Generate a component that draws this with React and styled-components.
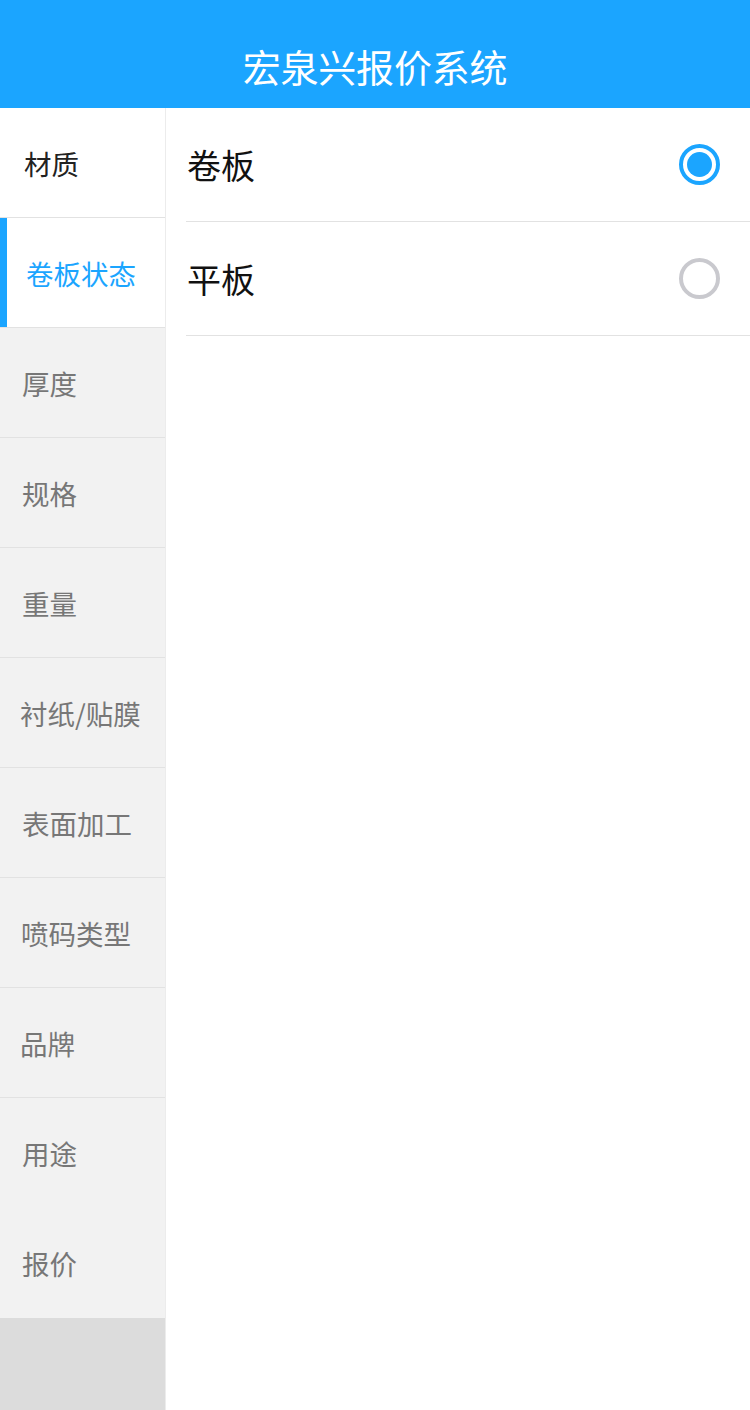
import React, { useState } from "react";
import styled, { createGlobalStyle } from "styled-components";

const GlobalStyle = createGlobalStyle`
  html, body { margin: 0; padding: 0; background: #fff; }
  body { font-family: "Noto Sans CJK SC", "Noto Sans", sans-serif; }
  * { box-sizing: border-box; }
`;

const Page = styled.div`
  width: 750px;
  height: 1410px;
  display: flex;
  flex-direction: column;
  overflow: hidden;
`;

const Header = styled.header`
  height: 108px;
  background: #1ba5ff;
  display: flex;
  align-items: flex-end;
  justify-content: center;
  padding-bottom: 23px;
`;

const Title = styled.h1`
  margin: 0;
  color: #fff;
  font-size: 38px;
  line-height: 38px;
  font-weight: 400;
  letter-spacing: -0.2px;
`;

const Body = styled.div`
  flex: 1;
  display: flex;
`;

const Sidebar = styled.nav`
  width: 166px;
  display: flex;
  flex-direction: column;
  background: #dcdcdc;
  border-right: 1px solid #ececec;
`;

const NavItem = styled.div`
  height: 110px;
  display: flex;
  align-items: center;
  padding-left: ${(p) => p.$pad}px;
  font-size: 27.5px;
  background: ${(p) => (p.$white ? "#fff" : "#f2f2f2")};
  color: ${(p) => (p.$active ? "#1ba5ff" : p.$dark ? "#222" : "#777")};
  border-bottom: ${(p) => (p.$noBorder ? "none" : "1px solid #e2e2e2")};
  box-shadow: ${(p) => (p.$active ? "inset 7px 0 0 #1ba5ff" : "none")};
  white-space: nowrap;
`;

const Content = styled.main`
  flex: 1;
  display: flex;
  flex-direction: column;
  padding-left: 20px;
  background: #fff;
`;

const OptionRow = styled.div`
  height: 114px;
  display: flex;
  align-items: center;
  justify-content: space-between;
  padding-right: 30px;
  border-bottom: 1px solid #e2e2e2;
  cursor: pointer;
`;

const OptionLabel = styled.span`
  font-size: 34px;
  color: #111;
  margin-left: 1px;
`;

const Radio = styled.span`
  width: 41px;
  height: 41px;
  border-radius: 50%;
  border: 4px solid ${(p) => (p.$checked ? "#1ba5ff" : "#c9c9ce")};
  display: flex;
  align-items: center;
  justify-content: center;
  &::after {
    content: "";
    width: 25px;
    height: 25px;
    border-radius: 50%;
    background: #1ba5ff;
    display: ${(p) => (p.$checked ? "block" : "none")};
  }
`;

const navItems = [
  { label: "材质", pad: 24, white: true, dark: true },
  { label: "卷板状态", pad: 26, white: true, active: true },
  { label: "厚度", pad: 22 },
  { label: "规格", pad: 22 },
  { label: "重量", pad: 22 },
  { label: "衬纸/贴膜", pad: 20 },
  { label: "表面加工", pad: 22 },
  { label: "喷码类型", pad: 21 },
  { label: "品牌", pad: 20 },
  { label: "用途", pad: 22, noBorder: true },
  { label: "报价", pad: 22, noBorder: true },
];

export default function App() {
  const [selected, setSelected] = useState("卷板");
  return (
    <>
      <GlobalStyle />
      <Page>
        <Header>
          <Title>宏泉兴报价系统</Title>
        </Header>
        <Body>
          <Sidebar>
            {navItems.map((n) => (
              <NavItem
                key={n.label}
                $pad={n.pad}
                $white={n.white}
                $dark={n.dark}
                $active={n.active}
                $noBorder={n.noBorder}
              >
                {n.label}
              </NavItem>
            ))}
          </Sidebar>
          <Content>
            {["卷板", "平板"].map((o) => (
              <OptionRow key={o} onClick={() => setSelected(o)}>
                <OptionLabel>{o}</OptionLabel>
                <Radio $checked={selected === o} />
              </OptionRow>
            ))}
          </Content>
        </Body>
      </Page>
    </>
  );
}
